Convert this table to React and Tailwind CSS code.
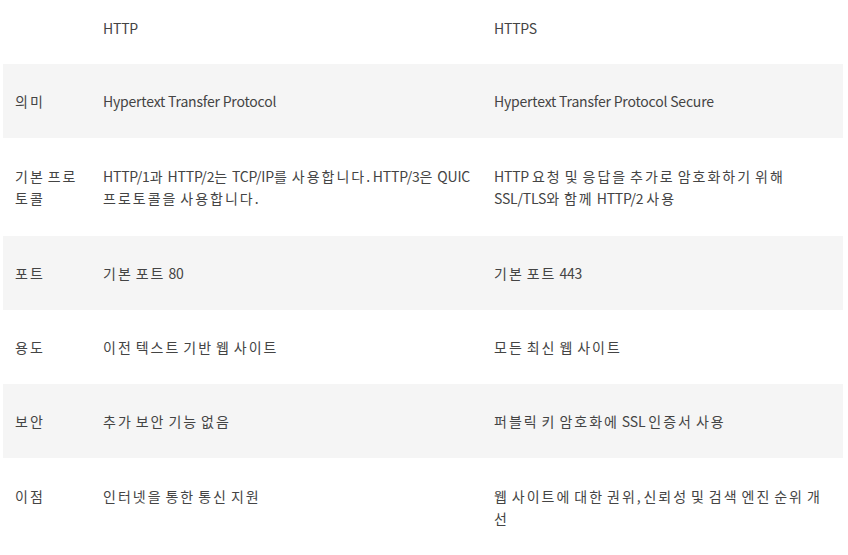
import React from 'react';

// each cell is a list of lines, broken where the reference breaks them
const rows = [
  { label: ['의미'], http: ['Hypertext Transfer Protocol'], https: ['Hypertext Transfer Protocol Secure'] },
  {
    label: ['기본 프로', '토콜'],
    http: ['HTTP/1과 HTTP/2는 TCP/IP를 사용합니다. HTTP/3은 QUIC', '프로토콜을 사용합니다.'],
    https: ['HTTP 요청 및 응답을 추가로 암호화하기 위해', 'SSL/TLS와 함께 HTTP/2 사용'],
    tall: true,
  },
  { label: ['포트'], http: ['기본 포트 80'], https: ['기본 포트 443'] },
  { label: ['용도'], http: ['이전 텍스트 기반 웹 사이트'], https: ['모든 최신 웹 사이트'] },
  { label: ['보안'], http: ['추가 보안 기능 없음'], https: ['퍼블릭 키 암호화에 SSL 인증서 사용'] },
  {
    label: ['이점'],
    http: ['인터넷을 통한 통신 지원'],
    https: ['웹 사이트에 대한 권위, 신뢰성 및 검색 엔진 순위 개', '선'],
    tall: true,
  },
];

// hangul in the source font runs wider than Noto's, so loosen those runs a bit
function Line({ text }) {
  return (
    <span className="block whitespace-nowrap">
      {text.split(/([\uAC00-\uD7A3]+)/).map((part, i) =>
        /[\uAC00-\uD7A3]/.test(part) ? (
          <span key={i} className="tracking-[2px]">{part}</span>
        ) : (
          part
        )
      )}
    </span>
  );
}

export default function App() {
  return (
    <div className="min-h-[555px] bg-white pl-[3px] font-['Noto_Sans_CJK_KR',sans-serif] text-[14px] leading-[22px] tracking-[-0.2px] text-[#444]">
      <table className="w-[840px] table-fixed border-collapse">
        <colgroup>
          <col className="w-[88px]" />
          <col className="w-[391px]" />
          <col className="w-[361px]" />
        </colgroup>
        <thead>
          <tr className="h-[64px]">
            <th className="px-3 pt-[17px] pb-[25px] text-left font-normal" />
            <th className="px-3 pt-[17px] pb-[25px] text-left font-normal">HTTP</th>
            <th className="px-3 pt-[17px] pb-[25px] text-left font-normal">HTTPS</th>
          </tr>
        </thead>
        <tbody>
          {rows.map((row, i) => (
            <tr key={row.label[0]} className={i % 2 === 0 ? 'bg-[#f5f5f5]' : 'bg-white'}>
              {[row.label, row.http, row.https].map((lines, j) => (
                <td key={j} className={`px-3 align-top ${row.tall ? 'py-[27px]' : 'py-[26px]'}`}>
                  {lines.map((line) => (
                    <Line key={line} text={line} />
                  ))}
                </td>
              ))}
            </tr>
          ))}
        </tbody>
      </table>
    </div>
  );
}
